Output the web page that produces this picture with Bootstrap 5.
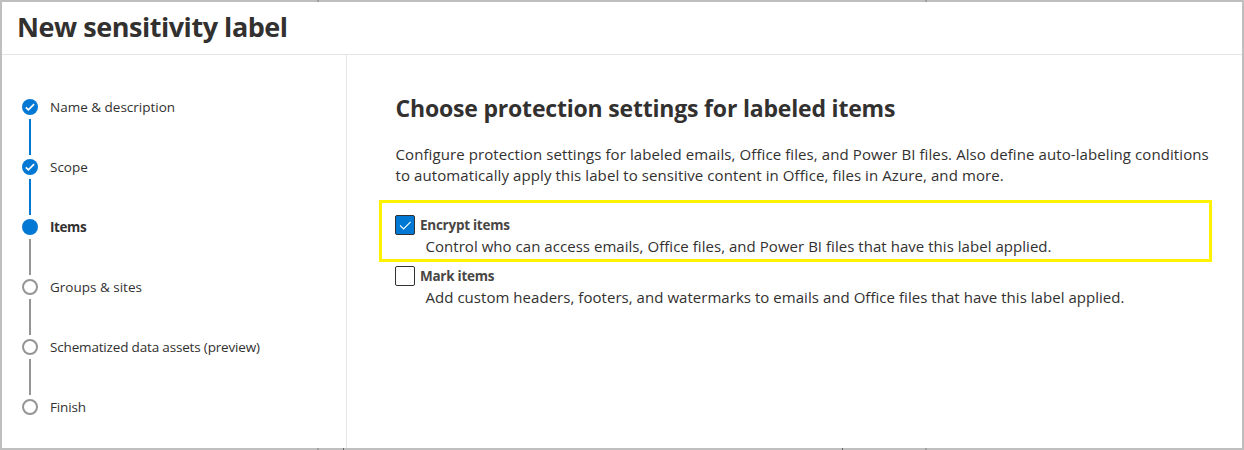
<!DOCTYPE html>
<html lang="en">
<head>
<meta charset="utf-8">
<meta name="viewport" content="width=device-width, initial-scale=1">
<title>New sensitivity label</title>
<link href="https://cdn.jsdelivr.net/npm/bootstrap@5.3.0/dist/css/bootstrap.min.css" rel="stylesheet">
<style>
body{font-family:"Open Sans","Noto Sans",sans-serif;color:#323130;font-size:15px;line-height:21px}
.frame{height:450px;padding:2px;background:
 linear-gradient(#a0a0a0,#a0a0a0) 317px 0/2px 100% no-repeat,
 linear-gradient(#a0a0a0,#a0a0a0) 925px 0/2px 100% no-repeat,
 linear-gradient(#666,#666) 343px 100%/1px 2px no-repeat,
 linear-gradient(#666,#666) 842px 100%/1px 2px no-repeat,#bfbfbf}
.page-head{height:53px;padding:5px 15px 0;border-bottom:1px solid #e5e5e5}
.page-head h1{font-size:27px;line-height:40px;font-weight:700;letter-spacing:-.46px}
.steps{width:345px;padding:34px 0 0 20px;border-right:1px solid #e5e5e5}
.step{height:60px;font-size:13.5px;line-height:36px}
.step:last-child{height:36px}
.rail{width:16px;padding-top:10px}
.rail svg{display:block}
.line{width:2px;height:36px;margin-top:4px;background:#979593}
.line.on{background:#0078d4}
.step-name{white-space:nowrap}
.step-name.fw-bold{letter-spacing:-.4px}
.step-name.tight{letter-spacing:-.17px}
.main-pane{padding:38px 0 0 32px}
.main-pane h2{font-size:23px;line-height:30px;font-weight:700;letter-spacing:-.19px;margin:0 0 21px 16.5px}
.intro{margin:0 0 14px 16.5px;letter-spacing:.09px}
.intro,.opt-text{white-space:nowrap}
.opt{width:833px;padding-left:13px;border:3px solid transparent}
.opt.hot{height:62px;padding-top:12px;border-color:#fff200}
.opt-row{height:20px}
.box{width:20px;height:20px;border:1px solid #323130;border-radius:2px}
.box.on{background:#0078d4}
.box svg{display:block}
.opt-name{font-size:13.5px;line-height:20px;font-weight:700;letter-spacing:-.26px;color:#484644;margin-left:5px}
.opt-text{margin-left:30.5px;padding-top:1px;letter-spacing:.04px}
</style>
</head>
<body>
<div class="frame"><div class="bg-white h-100 d-flex flex-column">
<header class="page-head flex-shrink-0"><h1 class="m-0">New sensitivity label</h1></header>
<div class="d-flex flex-grow-1">
<nav class="steps flex-shrink-0">
 <div class="step d-flex"><div class="rail d-flex flex-column align-items-center"><svg class="flex-shrink-0" width="16" height="16" viewBox="0 0 16 16"><circle cx="8" cy="8" r="8" fill="#0078d4"/><path d="M3.8 8.3l2.6 2.6 5.7-5.8" fill="none" stroke="#fff" stroke-width="1.7"/></svg><div class="line on flex-shrink-0"></div></div><span class="step-name ms-2 ps-1">Name &amp; description</span></div>
 <div class="step d-flex"><div class="rail d-flex flex-column align-items-center"><svg class="flex-shrink-0" width="16" height="16" viewBox="0 0 16 16"><circle cx="8" cy="8" r="8" fill="#0078d4"/><path d="M3.8 8.3l2.6 2.6 5.7-5.8" fill="none" stroke="#fff" stroke-width="1.7"/></svg><div class="line on flex-shrink-0"></div></div><span class="step-name ms-2 ps-1">Scope</span></div>
 <div class="step d-flex"><div class="rail d-flex flex-column align-items-center"><svg class="flex-shrink-0" width="16" height="16" viewBox="0 0 16 16"><circle cx="8" cy="8" r="8" fill="#0078d4"/></svg><div class="line flex-shrink-0"></div></div><span class="step-name ms-2 ps-1 fw-bold">Items</span></div>
 <div class="step d-flex"><div class="rail d-flex flex-column align-items-center"><svg class="flex-shrink-0" width="16" height="16" viewBox="0 0 16 16"><circle cx="8" cy="8" r="7" fill="#fff" stroke="#979593" stroke-width="2"/></svg><div class="line flex-shrink-0"></div></div><span class="step-name ms-2 ps-1">Groups &amp; sites</span></div>
 <div class="step d-flex"><div class="rail d-flex flex-column align-items-center"><svg class="flex-shrink-0" width="16" height="16" viewBox="0 0 16 16"><circle cx="8" cy="8" r="7" fill="#fff" stroke="#979593" stroke-width="2"/></svg><div class="line flex-shrink-0"></div></div><span class="step-name tight ms-2 ps-1">Schematized data assets (preview)</span></div>
 <div class="step d-flex"><div class="rail"><svg width="16" height="16" viewBox="0 0 16 16"><circle cx="8" cy="8" r="7" fill="#fff" stroke="#979593" stroke-width="2"/></svg></div><span class="step-name tight ms-2 ps-1">Finish</span></div>
</nav>
<main class="main-pane">
 <h2>Choose protection settings for labeled items</h2>
 <p class="intro">Configure protection settings for labeled emails, Office files, and Power BI files. Also define auto-labeling conditions<br>to automatically apply this label to sensitive content in Office, files in Azure, and more.</p>
 <div class="opt hot">
  <div class="opt-row d-flex"><div class="box on"><svg width="18" height="18" viewBox="0 0 18 18"><path d="M4 9.3l3.6 3.6 7-7" fill="none" stroke="#fff" stroke-width="1.1"/></svg></div><span class="opt-name">Encrypt items</span></div>
  <div class="opt-text">Control who can access emails, Office files, and Power BI files that have this label applied.</div>
 </div>
 <div class="opt pt-1 border-top-0">
  <div class="opt-row d-flex"><div class="box"></div><span class="opt-name">Mark items</span></div>
  <div class="opt-text">Add custom headers, footers, and watermarks to emails and Office files that have this label applied.</div>
 </div>
</main>
</div>
</div></div>
<script src="https://cdn.jsdelivr.net/npm/bootstrap@5.3.0/dist/js/bootstrap.bundle.min.js"></script>
</body>
</html>
